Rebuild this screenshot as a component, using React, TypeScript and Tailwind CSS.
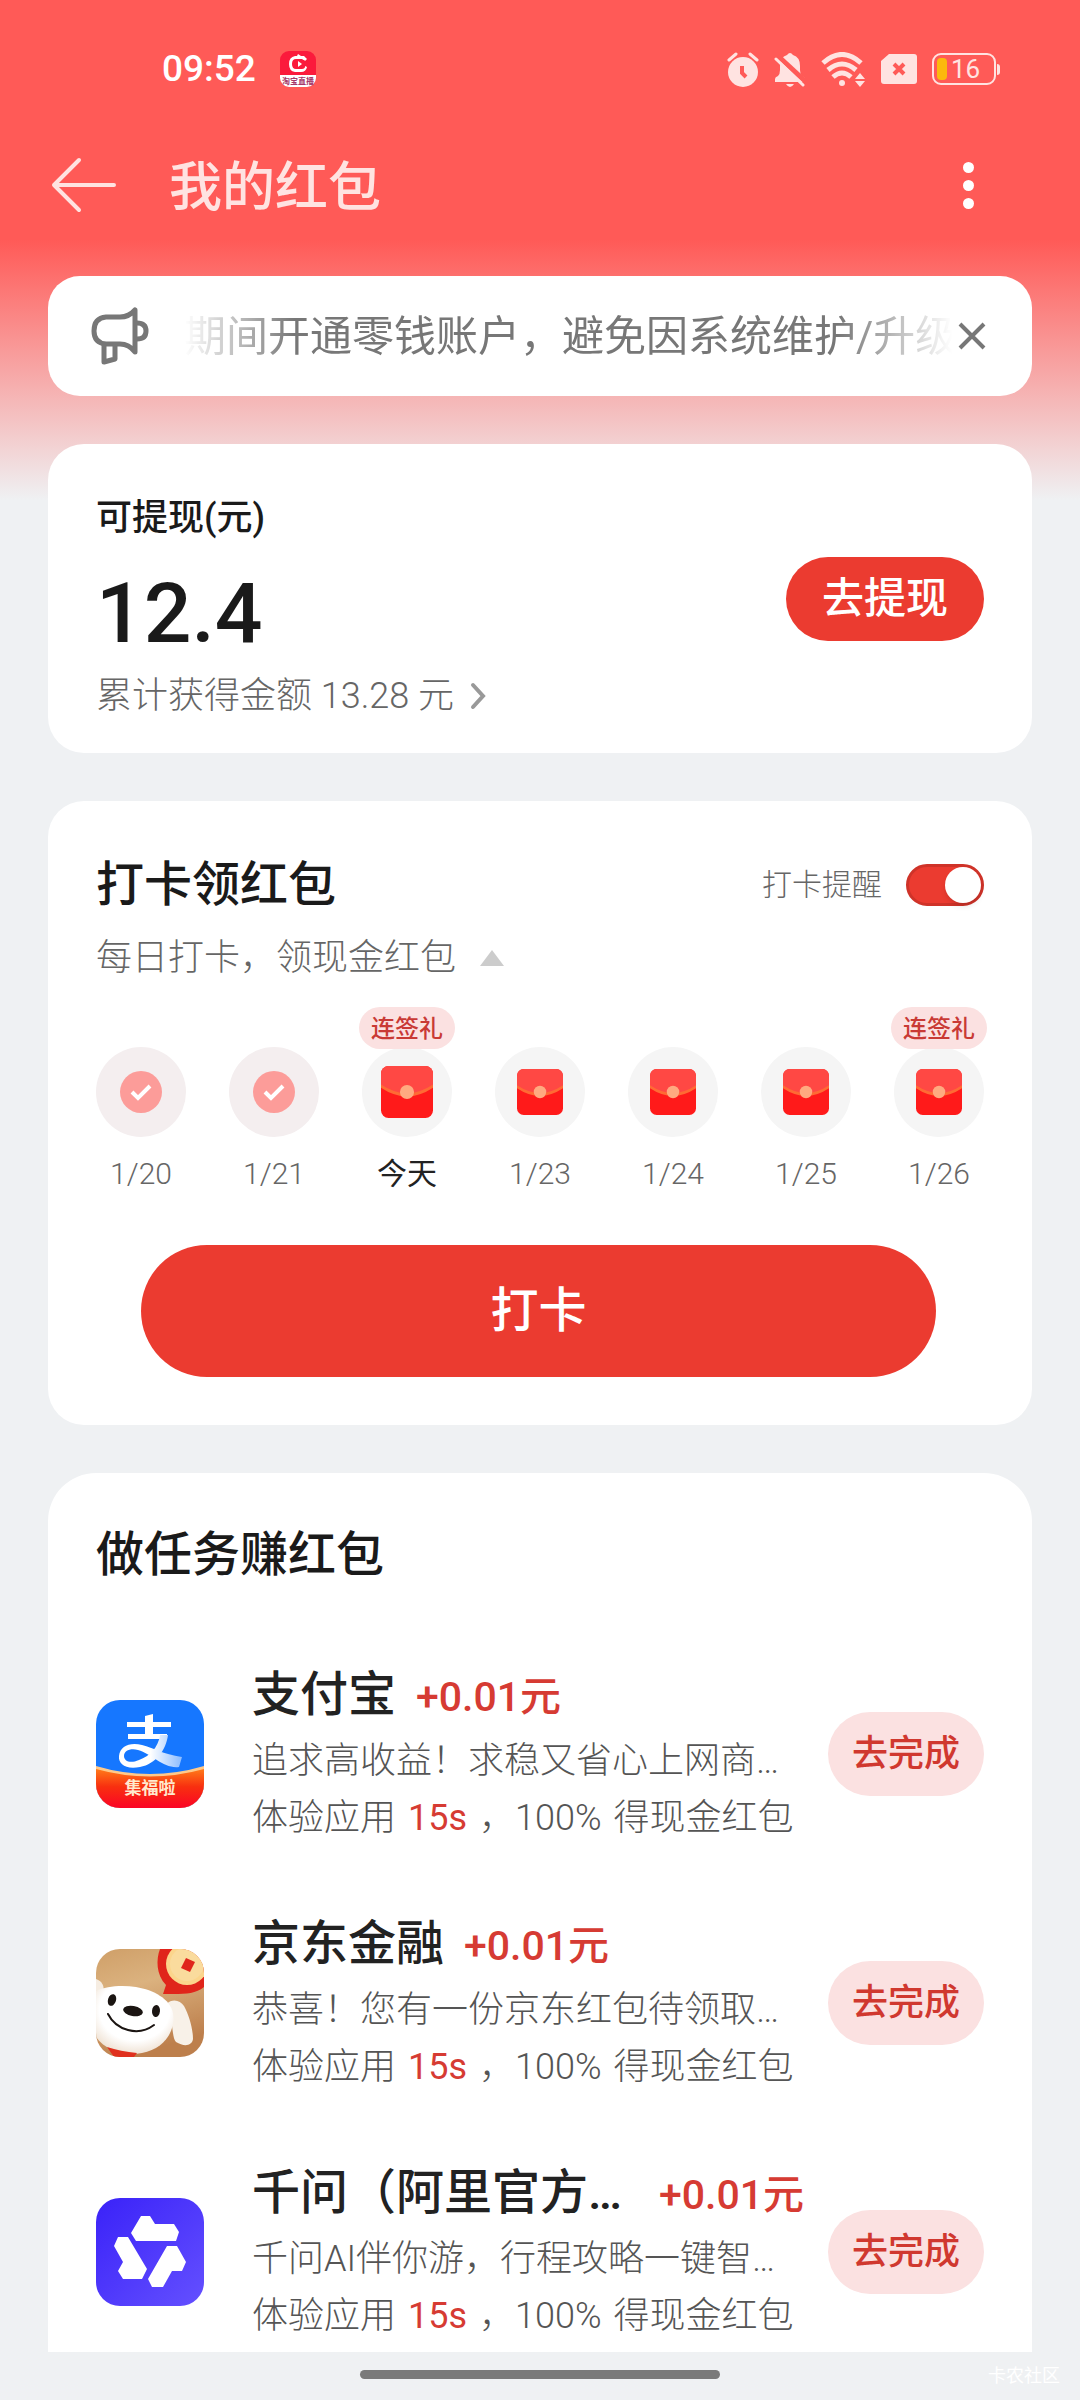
import type { ReactNode } from "react"

type Day = { label: string; state: "done" | "today" | "next"; gift?: boolean }

type Task = { name: string; desc: string; icon: ReactNode; fill?: boolean }

const AlipayIcon = () => (
    <svg viewBox="0 0 108 108" className="size-27 shrink-0 rounded-3xl" aria-hidden="true">
        <defs>
            <linearGradient id="ap-band" x1="0" y1="0" x2="0" y2="1">
                <stop offset="0" stopColor="#ff7a1a"/>
                <stop offset="0.45" stopColor="#f8300f"/>
                <stop offset="1" stopColor="#fb0426"/>
            </linearGradient>
            <linearGradient id="ap-tail" x1="0" y1="0" x2="1" y2="0">
                <stop offset="0.5" stopColor="#fff"/>
                <stop offset="1" stopColor="#8cbcff"/>
            </linearGradient>
        </defs>
        <rect width="108" height="108" fill="#1677ff"/>
        <path d="M31 22H75V27H31ZM49 16L57 14V36H49ZM32 34H71V39H32Z" fill="#fff"/>
        <path d="M64 35L72 35C70 50 60 64 44 67C30 70 22 64 23 56C24 46 34 42 46 45C58 48 66 54 86 57L83 67C68 69 56 54 42 50C34 48 28 51 28 56C28 61 34 64 43 60C54 56 62 48 64 35Z" fill="url(#ap-tail)"/>
        <path d="M0 66Q54 82 108 66V108H0Z" fill="#ffc98a"/>
        <path d="M0 69Q54 84 108 69V108H0Z" fill="url(#ap-band)"/>
        <text x="54" y="94" textAnchor="middle" fontSize="17" fontWeight="700" fill="#ffe9cf">集福啦</text>
    </svg>
)

const JdIcon = () => (
    <svg viewBox="0 0 108 108" className="size-27 shrink-0 rounded-3xl" aria-hidden="true">
        <defs>
            <linearGradient id="jd-bg" x1="0" y1="0" x2="0.3" y2="1">
                <stop offset="0" stopColor="#cf9f68"/>
                <stop offset="0.4" stopColor="#dbb27f"/>
                <stop offset="1" stopColor="#bd7f4c"/>
            </linearGradient>
            <radialGradient id="jd-head" cx="0.5" cy="0.35" r="0.7">
                <stop offset="0.65" stopColor="#fff"/>
                <stop offset="1" stopColor="#ecdccb"/>
            </radialGradient>
        </defs>
        <rect width="108" height="108" fill="url(#jd-bg)"/>
        <path d="M64 0H108V38C98 46 86 45 67 45L70 36C60 26 60 10 64 0Z" fill="#e0251b"/>
        <circle cx="91" cy="15" r="21" fill="#fbd58c"/>
        <circle cx="91" cy="15" r="17" fill="#fadb9d"/>
        <path d="M90 9L99 13L94 23L85 19Z" fill="#e0251b"/>
        <path d="M0 30C6 32 9 37 7 44L0 46Z" fill="#f6ede2"/>
        <path d="M70 55C77 49 84 51 88 57C93 66 97 80 97 90C96 97 88 98 80 93C75 88 78 68 70 55Z" fill="#f8f1e8"/>
        <path d="M0 42C10 37 26 36 40 38C58 41 74 50 77 64C80 82 68 100 46 104C28 107 10 102 0 88Z" fill="url(#jd-head)"/>
        <ellipse cx="16" cy="51" rx="4" ry="6" transform="rotate(18 16 51)" fill="#1b1512"/>
        <ellipse cx="60" cy="62" rx="4" ry="6" transform="rotate(5 60 62)" fill="#1b1512"/>
        <ellipse cx="37" cy="62" rx="10" ry="5" transform="rotate(10 37 62)" fill="#1b1512"/>
        <path d="M12 65C20 81 42 88 58 76" fill="none" stroke="#1b1512" strokeWidth="2" strokeLinecap="round"/>
        <path d="M11 98C20 101 30 103 41 104L38 108H18Z" fill="#e0301e"/>
    </svg>
)

const QwenIcon = () => (
    <svg viewBox="0 0 108 108" className="size-27 shrink-0 rounded-3xl" aria-hidden="true">
        <defs>
            <linearGradient id="qw-bg" x1="0" y1="0" x2="1" y2="1">
                <stop offset="0" stopColor="#3a22f8"/>
                <stop offset="1" stopColor="#6450ff"/>
            </linearGradient>
        </defs>
        <rect width="108" height="108" fill="url(#qw-bg)"/>
        <path d="M45 18H54L59 26H78L83 34L80 43H40L35 35Z" fill="#fff"/>
        <path d="M22 39H32L51 71L46 81H27L22 73L27 64L18 48Z" fill="#fff"/>
        <path d="M71 48H81L90 64L86 73H76L67 89H56L52 81Z" fill="#fff"/>
    </svg>
)

const days: Day[] = [
    { label: "1/20", state: "done" },
    { label: "1/21", state: "done" },
    { label: "今天", state: "today", gift: true },
    { label: "1/23", state: "next" },
    { label: "1/24", state: "next" },
    { label: "1/25", state: "next" },
    { label: "1/26", state: "next", gift: true },
]

const tasks: Task[] = [
    { name: "支付宝", desc: "追求高收益！求稳又省心上网商…", icon: <AlipayIcon/> },
    { name: "京东金融", desc: "恭喜！您有一份京东红包待领取…", icon: <JdIcon/> },
    { name: "千问（阿里官方…", desc: "千问AI伴你游，行程攻略一键智…", icon: <QwenIcon/>, fill: true },
]

const StatusBar = () => (
    <div className="flex h-[138px] items-center justify-between pr-20 pl-[162px]">
        <div className="flex items-center gap-6">
            <span className="text-[37px] font-medium text-white">09:52</span>
            <svg viewBox="0 0 36 36" className="size-9" aria-hidden="true">
                <rect width="36" height="36" rx="9" fill="#fb1a3c"/>
                <path d="M0 24H36V27A9 9 0 0 1 27 36H9A9 9 0 0 1 0 27Z" fill="#fff"/>
                <path d="M18 3L21 5H24L27 8L25 10L22 8H16Q12 8 12 13Q12 18 16 18H22Q25 18 25 15L27 16Q26 21 21 21H15Q9 20 9 13Q9 6 15 5H17Z" fill="#fff"/>
                <rect x="14" y="9" width="11" height="8" rx="2" fill="#fb1a3c"/>
                <path d="M18 10L22 13L18 16Z" fill="#fff"/>
                <text x="18" y="33" textAnchor="middle" fontSize="8" fontWeight="700" fill="#a5386a">淘宝直播</text>
            </svg>
        </div>
        <div className="flex items-center gap-[15px] text-[#ffe3e1]">
            <svg viewBox="0 0 32 35" className="h-[35px] w-8" aria-hidden="true">
                <circle cx="16" cy="20" r="15" fill="currentColor"/>
                <path d="M2 8L9 2M30 8L23 2" stroke="currentColor" strokeWidth="3" strokeLinecap="round"/>
                <path d="M15 14V21L19 25" fill="none" stroke="#ff5a57" strokeWidth="4"/>
            </svg>
            <svg viewBox="0 0 32 35" className="h-[35px] w-8" aria-hidden="true">
                <path d="M1 30V27Q1 25 4 24Q6 22 6 18V14Q6 5 13 3Q16 -1 19 3Q26 5 26 14V18Q26 22 28 24Q31 25 31 27V30Z" fill="currentColor"/>
                <path d="M12 32H20Q18 35 16 35Q14 35 12 32Z" fill="currentColor"/>
                <path d="M4 4L32 30" stroke="#ff5a57" strokeWidth="5"/>
                <path d="M2 7L29 33" stroke="currentColor" strokeWidth="3" strokeLinecap="round"/>
            </svg>
            <svg viewBox="0 0 45 35" className="h-[35px] w-[45px]" aria-hidden="true">
                <g fill="none" stroke="currentColor" strokeWidth="5">
                    <path d="M2 11Q21 -6 40 11"/>
                    <path d="M7 18Q21 6 35 18"/>
                    <path d="M12 25Q21 17 30 25"/>
                </g>
                <circle cx="21" cy="31" r="3" fill="currentColor"/>
                <path d="M34 27L39 21L44 27ZM34 29H44L39 35Z" fill="currentColor"/>
            </svg>
            <svg viewBox="0 0 36 30" className="h-[30px] w-9" aria-hidden="true">
                <path d="M8 0H33Q36 0 36 3V27Q36 30 33 30H3Q0 30 0 27V7Z" fill="currentColor"/>
                <path d="M13 10L23 20M23 10L13 20" stroke="#ff5a57" strokeWidth="4"/>
            </svg>
            <div className="flex items-center gap-px">
                <div className="flex h-8 w-16 items-center gap-1 rounded-[9px] border-2 border-current px-[3px]">
                    <span className="h-[22px] w-[10px] rounded-[4px] bg-[#fcb80d]"></span>
                    <span className="text-[26px] leading-7">16</span>
                </div>
                <span className="h-[11px] w-[3px] rounded-r-sm bg-current"></span>
            </div>
        </div>
    </div>
)

const Header = () => (
    <header className="flex h-[94px] items-center pr-24 pl-[51px] text-[#ffe3e1]">
        <button type="button" aria-label="返回">
            <svg viewBox="0 0 66 56" className="h-14 w-[66px]" fill="none" stroke="currentColor" strokeWidth="4" strokeLinecap="round" strokeLinejoin="round" aria-hidden="true">
                <path d="M28 3L3 28L28 53M3 28H63"/>
            </svg>
        </button>
        <h1 className="ml-[52px] grow pt-1.5 text-[53px] leading-none font-medium">我的红包</h1>
        <button type="button" aria-label="更多" className="flex w-8 flex-col items-center gap-[7px]">
            <span className="size-[11px] rounded-full bg-white"></span>
            <span className="size-[11px] rounded-full bg-white"></span>
            <span className="size-[11px] rounded-full bg-white"></span>
        </button>
    </header>
)

const Notice = () => (
    <section className="flex h-30 items-center rounded-[32px] bg-white pr-[46px] pl-10 text-[#777]">
        <svg viewBox="0 0 64 64" className="size-16 shrink-0" fill="none" stroke="currentColor" strokeWidth="5" strokeLinejoin="round" aria-hidden="true">
            <path d="M18 13H32Q41 13 47 6V48Q41 40 32 40H18Q6 39 6 27Q6 14 18 13Z"/>
            <path d="M49 19Q58 19 58 27Q58 35 49 35"/>
            <path d="M16 41V58L27 55V41"/>
        </svg>
        <p className="ml-8 w-0 grow text-[42px] whitespace-nowrap [mask-image:linear-gradient(to_right,transparent,#000_110px,#000_calc(100%-120px),transparent_calc(100%-6px))]">
            期间开通零钱账户，避免因系统维护/升级
        </p>
        <button type="button" aria-label="关闭">
            <svg viewBox="0 0 28 28" className="size-7" stroke="currentColor" strokeWidth="4" aria-hidden="true">
                <path d="M2 2L26 26M26 2L2 26"/>
            </svg>
        </button>
    </section>
)

const Balance = () => (
    <section className="flex items-center justify-between rounded-[36px] bg-white px-12">
        <div className="pt-12 pb-[29px]">
            <h2 className="text-4xl leading-[52px] font-medium text-[#1a1a1a]">可提现(元)</h2>
            <p className="mt-4 text-[84px] leading-[108px] font-medium text-[#1a1a1a]">12.4</p>
            <a href="#records" className="flex items-center text-4xl leading-14 font-light text-[#666]">
                累计获得金额 13.28 元
                <svg viewBox="0 0 18 28" className="ml-4 h-7 w-[18px]" fill="none" stroke="#999" strokeWidth="4" strokeLinecap="round" aria-hidden="true">
                    <path d="M3 3L13 14L3 25"/>
                </svg>
            </a>
        </div>
        <button type="button" className="h-21 w-[198px] rounded-full bg-[#eb3b30] text-[42px] font-medium text-white">去提现</button>
    </section>
)

const Envelope = ({ today }: { today: boolean }) => (
    <svg viewBox="0 0 48 48" className={today ? "size-13" : "size-[46px]"} aria-hidden="true">
        <rect width="48" height="48" rx="7" fill="#ff1a1a"/>
        <path d="M0 18V7A7 7 0 0 1 7 0H41A7 7 0 0 1 48 7V18Q24 34 0 18Z" fill="#ff4844"/>
        <path d="M0 17Q24 33 48 17V20Q24 36 0 20Z" fill="#ff6a34"/>
        <circle cx="24" cy="24" r="6.5" fill="#ffaa80"/>
    </svg>
)

const Check = () => (
    <svg viewBox="0 0 42 42" className="size-[42px]" aria-hidden="true">
        <circle cx="21" cy="21" r="21" fill="#fc9c99"/>
        <path d="M12 21L18 27L30 15" fill="none" stroke="#fff" strokeWidth="4"/>
    </svg>
)

const CheckIn = () => (
    <section className="rounded-[36px] bg-white px-12 py-12">
        <div className="flex h-18 items-center justify-between">
            <h2 className="text-5xl font-medium text-[#1a1a1a]">打卡领红包</h2>
            <label className="flex items-center gap-6 text-3xl font-light text-[#666]">
                打卡提醒
                <input
                    type="checkbox"
                    role="switch"
                    defaultChecked
                    className="flex h-[42px] w-[78px] appearance-none items-center rounded-full border-3 border-[#cf3329] bg-[#eb3b30] before:block before:size-9 before:rounded-full before:bg-white before:shadow-md checked:before:ml-auto"
                />
            </label>
        </div>
        <p className="flex items-center gap-6 text-4xl leading-[74px] font-light text-[#666]">
            每日打卡，领现金红包
            <svg viewBox="0 0 24 16" className="h-4 w-6" aria-hidden="true">
                <path d="M12 0L24 16H0Z" fill="#ccc"/>
            </svg>
        </p>
        <ul className="mt-[52px] flex justify-between">
            {days.map((day) => (
                <li key={day.label} className="relative flex w-[90px] flex-col items-center">
                    <span className={`flex size-[90px] items-center justify-center rounded-full ${day.state === "done" ? "bg-[#f4eeef]" : "bg-[#f5f5f5]"}`}>
                        {day.state === "done" ? <Check/> : <Envelope today={day.state === "today"}/>}
                    </span>
                    {day.gift && (
                        <span className="absolute -top-10 flex h-[42px] w-24 items-center justify-center rounded-full bg-[#fbe1e1] pt-0.5 text-2xl font-medium text-[#c93a35]">
                            连签礼
                        </span>
                    )}
                    <span className={`mt-3 text-3xl leading-[50px] ${day.state === "today" ? "text-[#222]" : "font-light text-[#666]"}`}>{day.label}</span>
                </li>
            ))}
        </ul>
        <div className="mt-[46px] pr-12 pl-[45px]">
            <button type="button" className="h-33 w-full rounded-full bg-[#eb3b30] text-5xl font-medium text-white">打卡</button>
        </div>
    </section>
)

const TaskRow = ({ task }: { task: Task }) => (
    <li className="flex h-[249px] items-center">
        {task.icon}
        <div className="ml-12 w-0 grow pt-1.5 whitespace-nowrap">
            <div className="flex items-baseline gap-5 pr-6">
                <h3 className={`text-5xl leading-14 font-medium text-[#222] ${task.fill ? "grow" : ""}`}>{task.name}</h3>
                <span className="text-[41px] leading-14 font-medium text-[#d63b33]">+0.01元</span>
            </div>
            <p className="mt-2 text-4xl leading-14 font-light text-[#555]">{task.desc}</p>
            <p className="text-4xl leading-[58px] font-light text-[#555]">
                体验应用<span className="mx-3 font-normal text-[#d63b33]">15s</span>，100%<span className="ml-3">得现金红包</span>
            </p>
        </div>
        <button type="button" className="h-21 w-39 shrink-0 rounded-full bg-[#fbe1e1] text-4xl font-medium text-[#d0382f]">去完成</button>
    </li>
)

export default function App() {
    return (
        <div className="min-h-screen bg-[linear-gradient(to_bottom,#ff5a57_240px,#eff1f3_500px)] font-['Roboto','Noto_Sans_CJK_SC',sans-serif]" lang="zh-CN">
            <StatusBar/>
            <Header/>
            <main className="mt-11 flex flex-col gap-12 px-12">
                <Notice/>
                <Balance/>
                <CheckIn/>
                <section className="rounded-t-[48px] bg-white px-12 pt-12">
                    <h2 className="pt-0.5 text-5xl leading-16 font-medium text-[#1a1a1a]">做任务赚红包</h2>
                    <ul className="mt-[42px]">
                        {tasks.map((task) => <TaskRow key={task.name} task={task}/>)}
                    </ul>
                </section>
            </main>

            {/* Gesture bar */}
            <footer className="fixed inset-x-0 bottom-0 flex h-12 items-center justify-center bg-[#eff1f3] pb-[3px]">
                <span className="h-[9px] w-1/3 rounded-full bg-[#7a7a7a]"></span>
                <span className="absolute right-5 bottom-3 text-lg leading-6 text-white">卡农社区</span>
            </footer>
        </div>
    )
}
